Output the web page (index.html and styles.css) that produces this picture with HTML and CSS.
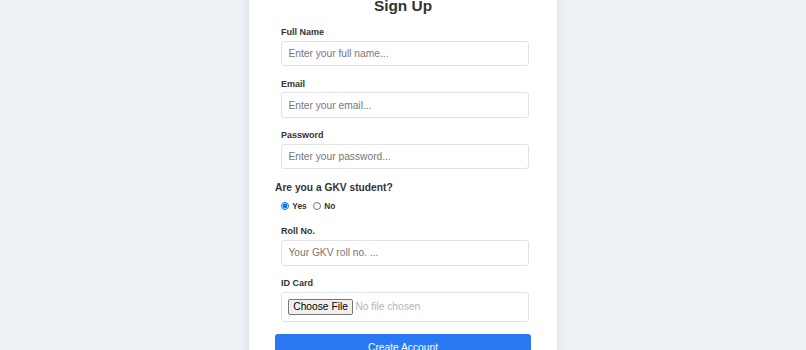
FILE: index.html
```html
<!DOCTYPE html>
<html lang="en">
<head>
<meta charset="utf-8">
<title>Sign Up</title>
<link rel="stylesheet" href="styles.css">
</head>
<body>
<div class="page">
  <form class="card">
    <h2 class="title">Sign Up</h2>
    <div class="field">
      <label class="label" for="name">Full Name</label>
      <input class="input" id="name" type="text" placeholder="Enter your full name...">
    </div>
    <div class="field">
      <label class="label" for="email">Email</label>
      <input class="input" id="email" type="email" placeholder="Enter your email...">
    </div>
    <div class="field">
      <label class="label" for="pw">Password</label>
      <input class="input" id="pw" type="password" placeholder="Enter your password...">
    </div>
    <h3 class="question">Are you a GKV student?</h3>
    <div class="radios">
      <label class="radio"><input type="radio" name="gkv" checked> Yes</label>
      <label class="radio"><input type="radio" name="gkv"> No</label>
    </div>
    <div class="field">
      <label class="label" for="roll">Roll No.</label>
      <input class="input" id="roll" type="text" placeholder="Your GKV roll no. ...">
    </div>
    <div class="field">
      <label class="label" for="idc">ID Card</label>
      <input class="input file" id="idc" type="file">
    </div>
    <button class="submit" type="button">Create Account</button>
  </form>
</div>
</body>
</html>
```

FILE: styles.css
```css
html, body {
  margin: 0;
  padding: 0;
}
body {
  background: #eef1f5;
  font-family: "Liberation Sans", Arial, sans-serif;
  color: #333;
}
.page {
  height: 350px;
  overflow: hidden;
  display: flex;
  justify-content: center;
  align-items: center;
}
.card {
  flex: none;
  width: 307.2px;
  box-sizing: border-box;
  padding: 25.6px 25.6px 24.6px;
  background: #fff;
  border-radius: 6px;
  box-shadow: 0 0 12px rgba(0, 0, 0, 0.08);
}
.title {
  margin: 7.2px 0 12.4px;
  font-size: 15.4px;
  line-height: 18px;
  font-weight: bold;
  text-align: center;
  color: #333;
}
.field {
  margin: 0 2px 12.4px 6px;
}
.label {
  display: block;
  font-size: 9px;
  line-height: 11px;
  font-weight: bold;
  color: #333;
  margin-bottom: 2.6px;
}
.input {
  display: block;
  box-sizing: border-box;
  width: 100%;
  height: 25.6px;
  margin: 0;
  padding: 0 6.4px;
  border: 1px solid #e2e2e2;
  border-radius: 3px;
  font-family: "Liberation Sans", Arial, sans-serif;
  font-size: 10.24px;
  color: #333;
  background: #fff;
}
.input::placeholder {
  color: #777;
}
.file {
  height: auto;
  padding: 6.4px;
  color: #b5b5b5;
}
.file::file-selector-button {
  font-family: "Liberation Sans", Arial, sans-serif;
  font-size: 10.24px;
  line-height: 11.8px;
  padding: 1px 3.9px;
  margin: 0 2.6px 0 0;
  border: 1px solid #767676;
  border-radius: 2px;
  background: #efefef;
  color: #000;
}
.question {
  margin: 0 0 6px;
  font-size: 10.24px;
  line-height: 12px;
  font-weight: bold;
  color: #333;
}
.radios {
  display: flex;
  margin: 0 0 14.5px 6px;
  gap: 6.4px;
  line-height: 12px;
}
.radio {
  display: inline-flex;
  align-items: center;
  gap: 3px;
  font-size: 8.32px;
  font-weight: bold;
  color: #333;
}
.radio input {
  width: 8.3px;
  height: 8.3px;
  margin: 0;
}
.submit {
  display: block;
  width: 100%;
  height: 27px;
  border: none;
  border-radius: 3px;
  background: #2a78f4;
  color: #fff;
  font-family: "Liberation Sans", Arial, sans-serif;
  font-size: 10.24px;
  cursor: pointer;
}
```
